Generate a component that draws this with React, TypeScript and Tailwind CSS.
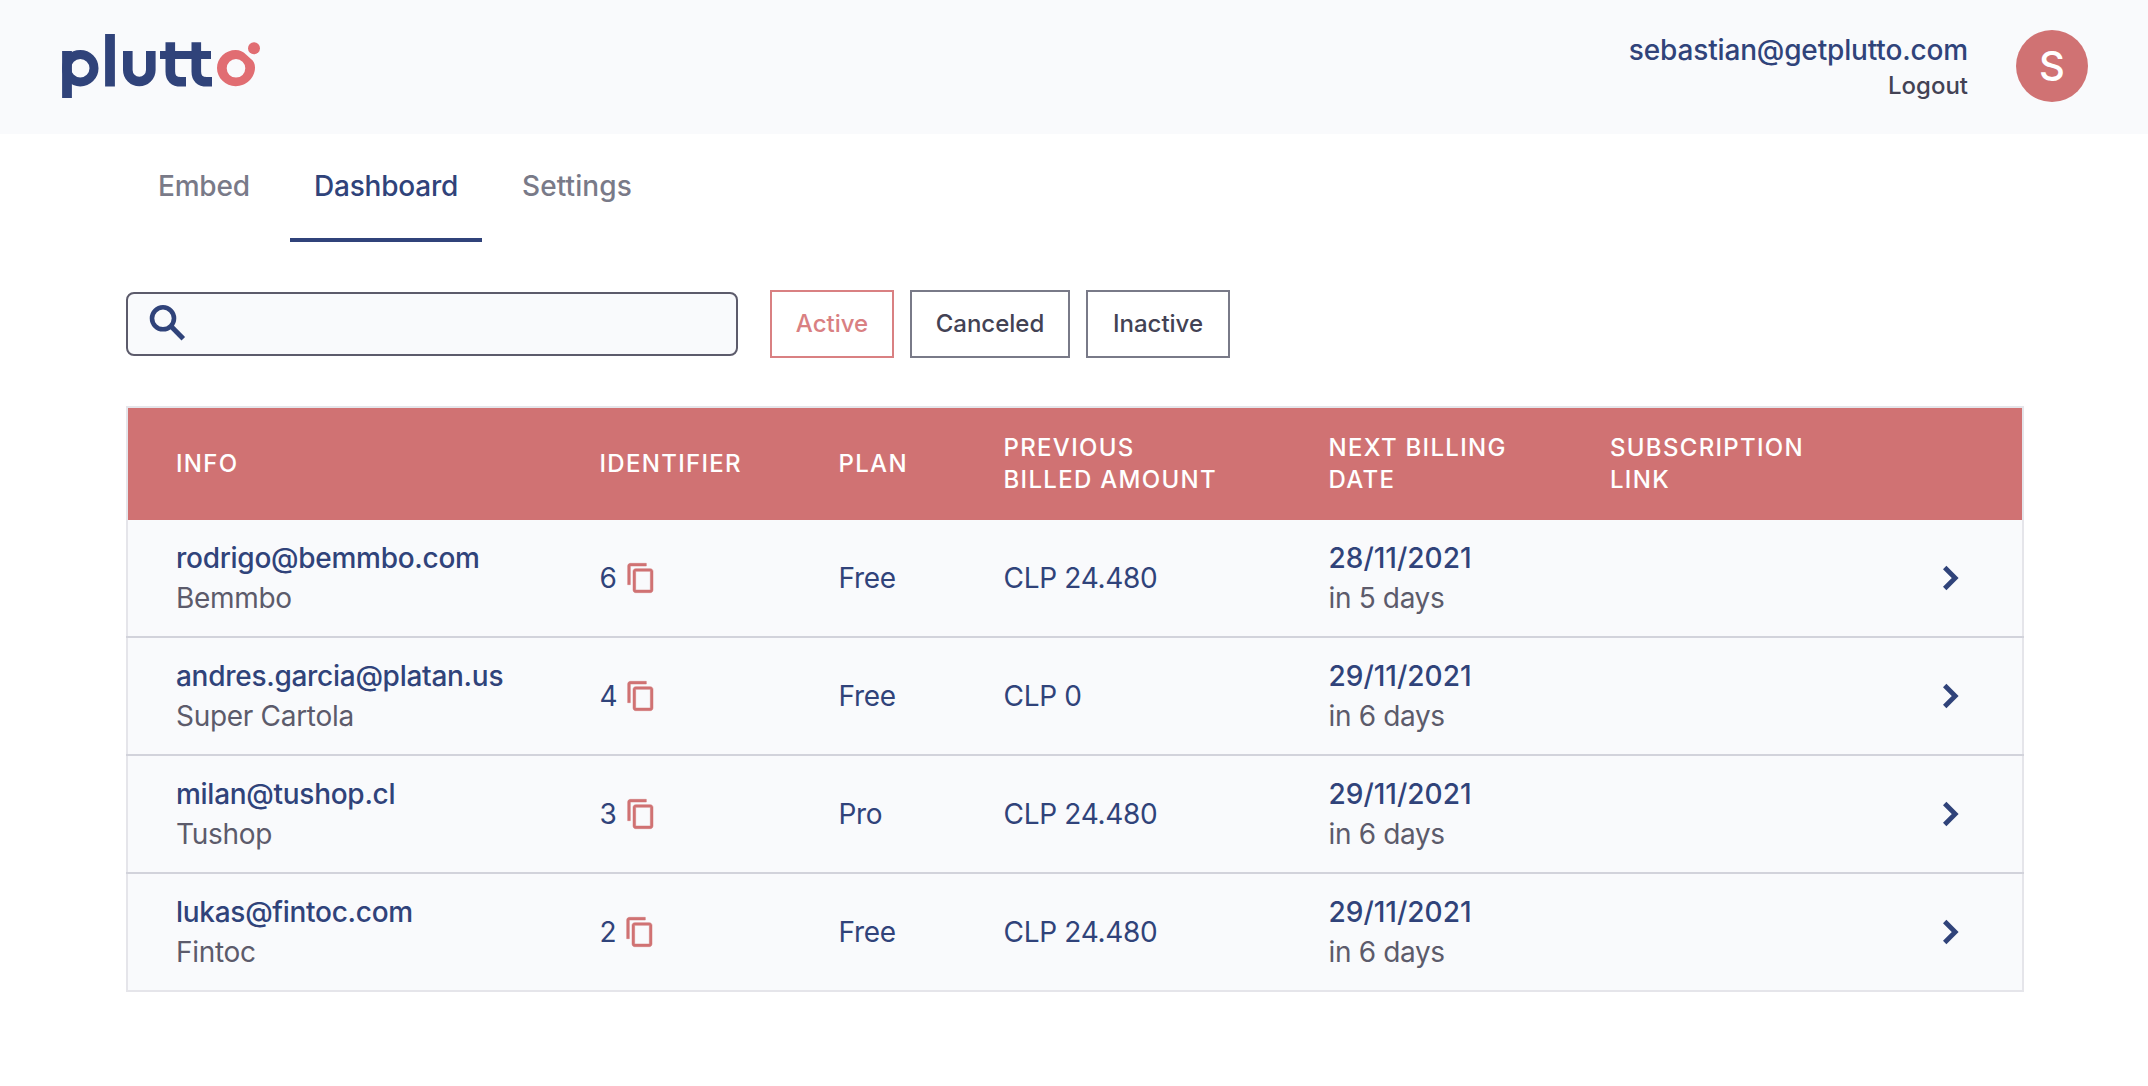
const rows = [
  { email: 'rodrigo@bemmbo.com', company: 'Bemmbo', id: '6', plan: 'Free', amount: 'CLP 24.480', date: '28/11/2021', days: 'in 5 days' },
  { email: 'andres.garcia@platan.us', company: 'Super Cartola', id: '4', plan: 'Free', amount: 'CLP 0', date: '29/11/2021', days: 'in 6 days' },
  { email: 'milan@tushop.cl', company: 'Tushop', id: '3', plan: 'Pro', amount: 'CLP 24.480', date: '29/11/2021', days: 'in 6 days' },
  { email: 'lukas@fintoc.com', company: 'Fintoc', id: '2', plan: 'Free', amount: 'CLP 24.480', date: '29/11/2021', days: 'in 6 days' },
];

const columns = 'grid grid-cols-[423.5px_239px_165px_325px_281.5px_333px_33px] items-center';

function Logo() {
  return (
    <svg className="h-[66px] w-[200px]" viewBox="0 0 200 66" fill="none" aria-label="plutto">
      <g stroke="#30437a" strokeWidth="9.8">
        <path d="M5 17V64" />
        <circle cx="18.3" cy="34.2" r="13.700" strokeWidth="9" />
        <path d="M48 0V52.500" />
        <path d="M65.800 17V36a11.500 11.500 0 0 0 23 0V17" strokeWidth="9.600" />
        <path d="M98 21H149" strokeWidth="8" />
        <path d="M108.300 8.300V37.500Q108.300 47.800 119 47.800H124" strokeWidth="9.600" />
        <path d="M134.300 8.300V37.500Q134.300 47.800 145 47.800H150" strokeWidth="9.600" />
      </g>
      <path
        fill="#e16d72"
        fillRule="evenodd"
        d="M173.700 16C178 16 181 17.500 184 20.500L189 25C191.500 27 193 29.500 193 33.500C193 44 184 52.200 173.700 52.200C163.500 52.200 155 44.200 155 34.100S163.500 16 173.700 16ZM174 25A9.300 9.300 0 0 0 174 43.600A9.300 9.300 0 0 0 174 25Z"
      />
      <circle cx="192" cy="14.200" r="6" fill="#e16d72" />
    </svg>
  );
}

function CopyIcon() {
  return (
    <svg className="size-8" viewBox="0 0 24 24" fill="#d07273" stroke="#d07273" strokeWidth=".35">
      <path d="M16 1H4c-1.100 0-2 .9-2 2v14h2V3h12V1zm3 4H8c-1.100 0-2 .9-2 2v14c0 1.100.9 2 2 2h11c1.100 0 2-.9 2-2V7c0-1.100-.9-2-2-2zm0 16H8V7h11v14z" />
    </svg>
  );
}

function Chevron() {
  return (
    <svg className="h-[26px] w-4" viewBox="0 0 16 26" fill="none" stroke="#30437a" strokeWidth="4.800">
      <path d="M1.700 2.500L12.200 13L1.700 23.500" />
    </svg>
  );
}

export default function App() {
  return (
    <div className="min-h-[1086px] bg-white font-['Inter',sans-serif] text-[28px] leading-10 text-[#30437a]">
      <header className="flex h-[134px] items-center justify-between bg-[#f9fafc] pr-[60px] pl-[62px]">
        <Logo />
        <div className="flex items-center gap-12 pb-0.5">
          <div className="pt-1 text-right font-medium">
            <div className="leading-9 tracking-[-0.16px]">sebastian@getplutto.com</div>
            <div className="text-2xl leading-9 text-[#434254]">Logout</div>
          </div>
          <div className="flex size-[72px] items-center justify-center rounded-full bg-[#d07273] text-[40px] font-medium text-white">S</div>
        </div>
      </header>

      <nav className="ml-[134px] flex h-[108px] gap-4 font-medium tracking-[-0.22px] text-[#797a88]">
        <a className="w-[140px] px-6 pt-8">Embed</a>
        <a className="w-48 border-b-4 border-[#30437a] px-6 pt-8 text-[#30437a]">Dashboard</a>
        <a className="px-6 pt-8 tracking-[0.1px]">Settings</a>
      </nav>

      <main className="mx-[126px] w-[1898px] pt-12">
        <div className="flex items-center text-2xl font-medium">
          <div className="mr-8 flex h-16 w-[612px] items-center rounded-lg border-2 border-[#5c5b6b] bg-[#f9fafc] pl-4">
            <svg className="size-12" viewBox="0 0 48 48" fill="none" stroke="#30437a">
              <circle cx="19" cy="18.300" r="11" strokeWidth="4.600" />
              <path d="M27 26.300L39.300 38.700" strokeWidth="5" />
            </svg>
          </div>
          <div className="flex gap-4 text-[#434254]">
            <button className="h-[68px] w-[124px] border-2 border-[#d98082] text-[#d98082]">Active</button>
            <button className="h-[68px] w-[160px] border-2 border-[#797a88]">Canceled</button>
            <button className="h-[68px] w-[144px] border-2 border-[#797a88]">Inactive</button>
          </div>
        </div>

        <section className="mt-12 border-2 border-[#e5e5ea] bg-[#f9fafc]">
          <div className={`${columns} h-28 bg-[#d07273] pl-12 text-2xl leading-8 font-medium tracking-[1.3px] text-white`}>
            <div>INFO</div>
            <div>IDENTIFIER</div>
            <div>PLAN</div>
            <div>PREVIOUS<br />BILLED AMOUNT</div>
            <div>NEXT BILLING<br />DATE</div>
            <div>SUBSCRIPTION<br />LINK</div>
          </div>
          {rows.map((r) => (
            <div key={r.email} className={`${columns} -mx-0.5 h-[118px] border-b-2 border-[#d2d3db] pl-[50px] tracking-[-0.3px] last:mx-0 last:h-[116px] last:border-b-0 last:pl-12`}>
              <div>
                <div className="font-medium tracking-[-0.28px]">{r.email}</div>
                <div className="text-[#5c5b6b]">{r.company}</div>
              </div>
              <div className="flex items-center gap-2">{r.id}<CopyIcon /></div>
              <div>{r.plan}</div>
              <div>{r.amount}</div>
              <div>
                <div className="font-medium tracking-normal">{r.date}</div>
                <div className="tracking-[-0.35px] text-[#5c5b6b]">{r.days}</div>
              </div>
              <div />
              <Chevron />
            </div>
          ))}
        </section>
      </main>
    </div>
  );
}
